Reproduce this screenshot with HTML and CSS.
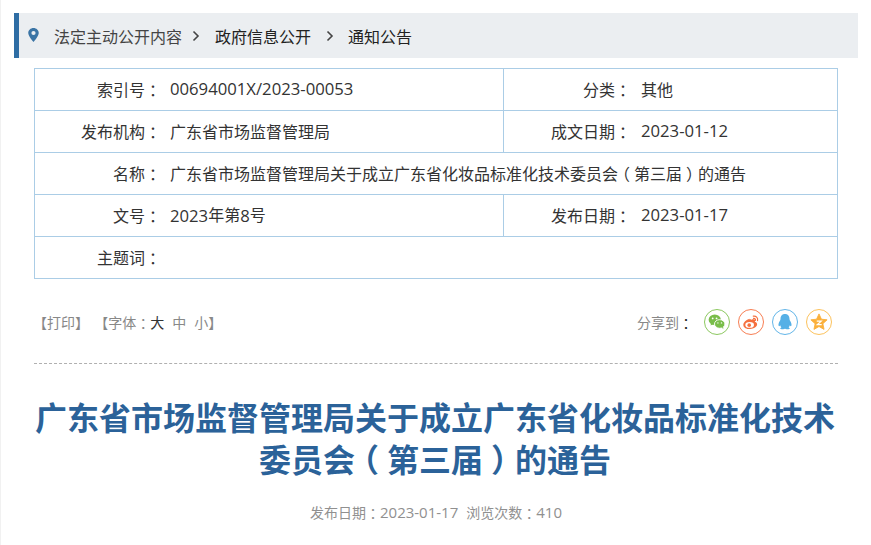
FILE: index.html
```html
<!DOCTYPE html>
<html lang="zh-CN">

<head>
    <meta charset="UTF-8">
    <title>通知公告</title>
    <link rel="stylesheet" href="styles.css">
</head>

<body>
    <div class="page">
        <div class="crumb">
            <svg class="pin" width="11" height="14" viewBox="0 0 12 16">
                <path fill="#3a74a5" fill-rule="evenodd" d="M6 0C2.700 0 0 2.600 0 5.800 0 9.600 6 16 6 16s6-6.400 6-10.200C12 2.600 9.300 0 6 0zm0 8.100a2.400 2.400 0 1 1 0-4.800 2.400 2.400 0 0 1 0 4.800z"/>
            </svg>
            <a class="crumb-first">法定主动公开内容</a>
            <svg class="arrow arrow-a" width="8" height="12" viewBox="0 0 8 12"><path d="M1.500 1.500 6 6l-4.500 4.500" fill="none" stroke="#444" stroke-width="1.600"/></svg>
            <a>政府信息公开</a>
            <svg class="arrow arrow-b" width="8" height="12" viewBox="0 0 8 12"><path d="M1.500 1.500 6 6l-4.500 4.500" fill="none" stroke="#444" stroke-width="1.600"/></svg>
            <a>通知公告</a>
        </div>

        <table class="info">
            <tr>
                <td class="label">索引号<span class="punct">：</span></td>
                <td class="value"><span class="num">00694001X/2023-00053</span></td>
                <td class="label">分类<span class="punct">：</span></td>
                <td class="value value-r">其他</td>
            </tr>
            <tr>
                <td class="label">发布机构<span class="punct">：</span></td>
                <td class="value">广东省市场监督管理局</td>
                <td class="label">成文日期<span class="punct">：</span></td>
                <td class="value value-r"><span class="num">2023-01-12</span></td>
            </tr>
            <tr>
                <td class="label">名称<span class="punct">：</span></td>
                <td class="value" colspan="3">广东省市场监督管理局关于成立广东省化妆品标准化技术委员会<span class="punct">（</span>第三届<span class="punct">）</span>的通告</td>
            </tr>
            <tr>
                <td class="label">文号<span class="punct">：</span></td>
                <td class="value"><span class="num">2023</span>年第<span class="num">8</span>号</td>
                <td class="label">发布日期<span class="punct">：</span></td>
                <td class="value value-r"><span class="num">2023-01-17</span></td>
            </tr>
            <tr>
                <td class="label">主题词<span class="punct">：</span></td>
                <td class="value" colspan="3"></td>
            </tr>
        </table>

        <div class="tools">
            <div class="print-font">
                <span>【打印】</span>
                <span class="font-set">【字体<span class="punct">：</span><b>大</b><i>中</i><i>小</i>】</span>
            </div>
            <div class="share">
                <span class="share-label">分享到<span class="punct">：</span></span>
                <a class="icon icon-wx">
                    <svg width="20" height="20" viewBox="0 0 20 20">
                        <ellipse cx="7.500" cy="7.500" rx="6.800" ry="5.700" fill="#79bd4a"/>
                        <path d="M3.500 11l-.6 3 3-1.700z" fill="#79bd4a"/>
                        <ellipse cx="13" cy="12.200" rx="5.800" ry="4.800" fill="#79bd4a" stroke="#fff" stroke-width="1"/>
                        <path d="M15.500 16l1.500 2-.2-3z" fill="#79bd4a"/>
                        <circle cx="5.200" cy="6" r="1" fill="#fff"/>
                        <circle cx="9.500" cy="6" r="1" fill="#fff"/>
                        <circle cx="11" cy="11" r=".8" fill="#fff"/>
                        <circle cx="15" cy="11" r=".8" fill="#fff"/>
                    </svg>
                </a>
                <a class="icon icon-wb">
                    <svg width="20" height="20" viewBox="0 0 20 20">
                        <path d="M8.500 6.500C4.800 7.500 1.200 10.800 1.500 13.500c.4 3 4 4.500 7.500 4.300 4.200-.2 7.800-2.500 7.800-5.300 0-1.700-1.600-2.400-2.500-2.700.5-1.500.2-2.500-1-2.800-1.300-.3-3 .3-3.500.8.200-1-.2-1.500-1.300-.3z" fill="#f5703f"/>
                        <ellipse cx="8.500" cy="13.300" rx="4.800" ry="3.200" fill="#fff"/>
                        <circle cx="8" cy="13.500" r="2" fill="#f5703f"/>
                        <path d="M12.500 3.500c3-.6 5.500 1.800 4.800 5M12.800 6c1.500-.3 2.500.8 2.200 2.300" fill="none" stroke="#f5703f" stroke-width="1.300" stroke-linecap="round"/>
                    </svg>
                </a>
                <a class="icon icon-qq">
                    <svg width="20" height="20" viewBox="0 0 20 20">
                        <path d="M10 1C6.500 1 5 3.500 5 6.500c0 1-.2 1.500-.8 2.500C3 11 2.300 13 3 14.500c.5.500 1.200-.3 1.700-1 .2 1 .7 1.800 1.300 2.500-1 .4-1.500 1-1.300 1.600.3.800 3 .7 5.300-.1 2.300.8 5 .9 5.300.1.200-.6-.3-1.200-1.300-1.600.6-.7 1.100-1.500 1.300-2.500.5.700 1.200 1.500 1.700 1 .7-1.500 0-3.500-1.200-5.500-.6-1-.8-1.500-.8-2.500C15 3.500 13.500 1 10 1z" fill="#55b0e6"/>
                    </svg>
                </a>
                <a class="icon icon-fav">
                    <svg width="20" height="20" viewBox="0 0 20 20">
                        <path d="M10 1l2.700 5.900 6.300.7-4.700 4.300 1.300 6.300L10 15l-5.600 3.200 1.300-6.300L1 7.600l6.300-.7z" fill="#fbb03b" stroke="#fbb03b" stroke-linejoin="round"/>
                        <path d="M7.500 9h5l-4.500 4h5" fill="none" stroke="#fff" stroke-width="1.300"/>
                    </svg>
                </a>
            </div>
        </div>

        <h1 class="title">广东省市场监督管理局关于成立广东省化妆品标准化技术委员会<span class="punct">（</span>第三届<span class="punct">）</span>的通告</h1>
        <div class="meta">发布日期<span class="punct">：</span><span class="num">2023-01-17</span><span class="views">浏览次数<span class="punct">：</span><span class="num">410</span></span></div>
    </div>
</body>

</html>
```

FILE: styles.css
```css
html {
    background: #f1f1f1;
}

body {
    margin: 0 0 0 1px;
    height: 545px;
    overflow: hidden;
    background: #fff;
    font-family: "Open Sans", "Noto Sans CJK SC", sans-serif;
    font-size: 16px;
    color: #333;
}

.page {
    padding: 13px 13px 0 13px;
}

/* half-width punctuation glyph, padded so it sits centred in a full em */
.punct {
    font-feature-settings: "halt";
    padding: 0 .25em;
}

.crumb {
    display: flex;
    align-items: center;
    height: 45px;
    background: #ebeef1;
    border-left: 5px solid #2e6da4;
    color: #222;
}

.pin {
    margin: 0 0 2px 9px;
}

.crumb-first {
    margin-left: 15px;
    color: #444;
}

.arrow-a {
    margin: 0 15px 0 10px;
}

.arrow-b {
    margin: 0 14px 0 15px;
}

.info {
    width: 804px;
    margin: 10px 0 0 20px;
    border-collapse: collapse;
    table-layout: fixed;
}

.info td {
    height: 39px;
    padding: 0 0 2px;
    border: 1px solid #abcde6;
}

.info td.label {
    width: 127px;
    text-align: right;
    border-right: 0;
}

.info td:first-child {
    width: 126px;
}

.info td.value {
    padding-left: 9px;
    border-left: 0;
}

.info td.value-r {
    width: 196px;
    padding-left: 10px;
}

.num {
    font-size: 16.700px;
}

.info .num {
    vertical-align: -1px;
}

.tools {
    display: flex;
    justify-content: space-between;
    align-items: center;
    box-sizing: border-box;
    width: 804px;
    height: 85px;
    margin-left: 20px;
    padding-right: 6px;
    border-bottom: 1px dashed #b0b0b0;
    font-size: 14px;
    color: #888;
}

.print-font {
    margin: 1px 0 0 -1px;
}

.font-set {
    margin-left: 1.500px;
}

.font-set b {
    font-weight: normal;
    color: #333;
}

.font-set i {
    font-style: normal;
    margin-left: 8px;
}

.share {
    display: flex;
    align-items: center;
    margin-top: 1px;
}

.share-label .punct {
    color: #222;
}

.share-label {
    margin-right: 3px;
}

.icon {
    display: flex;
    align-items: center;
    justify-content: center;
    box-sizing: border-box;
    width: 26px;
    height: 26px;
    margin-left: 8px;
    border: 1px solid;
    border-radius: 50%;
}

.icon svg {
    width: 18px;
    height: 18px;
}

.icon-wx {
    border-color: #8cc860;
}

.icon-wb {
    border-color: #f77e53;
}

.icon-qq {
    border-color: #62b5e8;
}

.icon-fav {
    border-color: #fcc25c;
}

.title {
    margin: 33px 0 0 19px;
    width: 804px;
    font-size: 32px;
    line-height: 42px;
    font-weight: bold;
    text-align: center;
    color: #2b6299;
}

.meta {
    margin: 21px 0 0 20px;
    width: 804px;
    text-align: center;
    font-size: 14px;
    color: #909090;
}

.meta .num {
    font-size: 15px;
}

.views {
    margin-left: 8px;
}
```
